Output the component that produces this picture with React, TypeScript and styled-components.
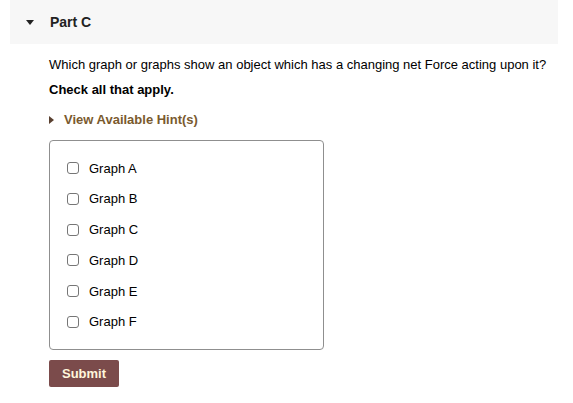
import React from 'react'
import styled, { createGlobalStyle } from 'styled-components'

const GlobalStyle = createGlobalStyle`
  html, body {
    margin: 0;
    padding: 0;
    background: #ffffff;
  }
  body {
    font-family: "Liberation Sans", Arial, sans-serif;
    color: #000;
  }
`

const Page = styled.div`
  padding: 0 15px 0 10px;
`

const PartHeader = styled.div`
  display: flex;
  align-items: center;
  height: 44px;
  background: #f7f7f7;
  padding-left: 16px;
`

const Caret = styled.span<{ $dir: 'down' | 'right'; $color?: string }>`
  display: inline-block;
  width: 0;
  height: 0;
  ${({ $dir, $color = '#222' }) =>
    $dir === 'down'
      ? `border-left: 4.5px solid transparent; border-right: 4.5px solid transparent; border-top: 5px solid ${$color};`
      : `border-top: 4px solid transparent; border-bottom: 4px solid transparent; border-left: 5px solid ${$color};`}
`

const PartTitle = styled.span`
  margin-left: 16px;
  font-size: 14px;
  font-weight: bold;
  color: #222;
`

const Body = styled.div`
  padding: 12px 0 0 39px;
`

const Question = styled.p`
  margin: 0;
  font-size: 13px;
  line-height: 17px;
`

const Instruction = styled.p`
  margin: 8px 0 0;
  font-size: 13px;
  line-height: 17px;
  font-weight: bold;
`

const HintToggle = styled.div`
  display: flex;
  align-items: center;
  gap: 10px;
  margin-top: 13px;
  font-size: 13px;
  line-height: 17px;
  font-weight: bold;
  color: #7a5a2e;
`

const ChoiceBox = styled.div`
  display: flex;
  flex-direction: column;
  gap: 12.8px;
  width: 275px;
  box-sizing: border-box;
  margin-top: 12px;
  padding: 18px 17px 18px 17px;
  border: 1px solid #8f8f8f;
  border-radius: 4px;
`

const Choice = styled.label`
  display: flex;
  align-items: center;
  gap: 10px;
  height: 18px;
  font-size: 13px;
`

const Box = styled.span`
  display: inline-block;
  width: 12px;
  height: 12px;
  box-sizing: border-box;
  border: 1px solid #767676;
  border-radius: 3px;
  background: #fff;
`

const SubmitButton = styled.button`
  margin-top: 10px;
  width: 70px;
  height: 27px;
  border: none;
  border-radius: 2px;
  background: #7b4b4b;
  color: #fff6dc;
  font-family: "Liberation Sans", Arial, sans-serif;
  font-size: 13px;
  font-weight: bold;
  cursor: pointer;
`

const choices = ['Graph A', 'Graph B', 'Graph C', 'Graph D', 'Graph E', 'Graph F']

const App = () => (
  <>
    <GlobalStyle />
    <Page>
      <PartHeader>
        <Caret $dir="down" />
        <PartTitle>Part C</PartTitle>
      </PartHeader>
      <Body>
        <Question>Which graph or graphs show an object which has a changing net Force acting upon it?</Question>
        <Instruction>Check all that apply.</Instruction>
        <HintToggle>
          <Caret $dir="right" $color="#5a4030" />
          View Available Hint(s)
        </HintToggle>
        <ChoiceBox>
          {choices.map((c) => (
            <Choice key={c}>
              <Box />
              {c}
            </Choice>
          ))}
        </ChoiceBox>
        <SubmitButton>Submit</SubmitButton>
      </Body>
    </Page>
  </>
)

export default App
